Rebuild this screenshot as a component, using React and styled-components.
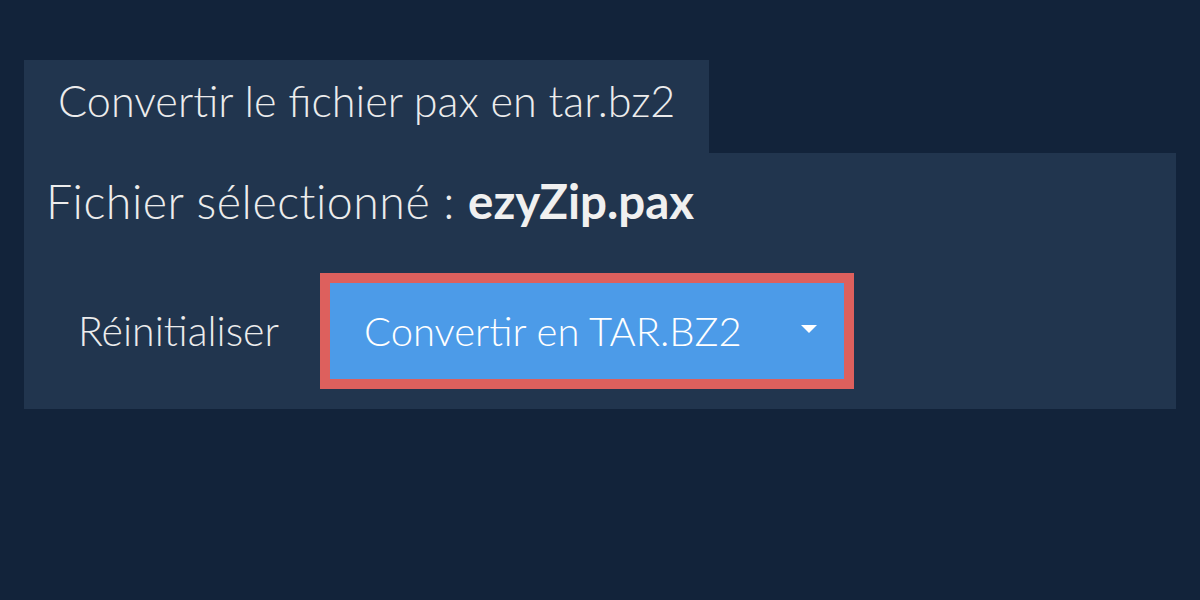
import React from "react";
import styled, { createGlobalStyle } from "styled-components";

const Global = createGlobalStyle`
  html, body { margin: 0; padding: 0; }
  body {
    background: #12233a;
    font-family: Lato, "Open Sans", sans-serif;
    font-weight: 300;
    color: #ececec;
    width: 1200px;
    height: 600px;
    overflow: hidden;
  }
`;

const Page = styled.div`
  padding: 60px 24px 0 24px;
`;

const Tab = styled.div`
  box-sizing: border-box;
  width: 685px;
  background: #21354e;
  font-size: 43.2px;
  line-height: 52px;
  padding: 14px 0 27px 34px;
  white-space: nowrap;
`;

const Panel = styled.div`
  background: #21354e;
  padding: 20px 22px 20px 22px;
`;

const FileLine = styled.div`
  font-size: 46.5px;
  line-height: 56px;
  letter-spacing: 0.5px;
  margin-bottom: 44px;
  white-space: nowrap;
`;

const FileName = styled.strong`
  font-weight: 700;
  font-size: 47.5px;
  letter-spacing: 0;
  color: #f0f0f0;
`;

const Actions = styled.div`
  display: flex;
  align-items: center;
  gap: 41px;
  padding-left: 32px;
`;

const ResetButton = styled.button`
  background: transparent;
  border: none;
  color: #ececec;
  font-family: inherit;
  font-weight: 300;
  font-size: 41px;
  line-height: 50px;
  padding: 0;
  cursor: pointer;
`;

const ConvertFrame = styled.div`
  border: 10px solid #dd605d;
`;

const ConvertButton = styled.button`
  display: flex;
  align-items: center;
  justify-content: space-between;
  box-sizing: border-box;
  width: 514px;
  height: 96px;
  background: #4c9be8;
  border: none;
  color: #ffffff;
  font-family: inherit;
  font-weight: 300;
  font-size: 40px;
  padding: 0 27px 0 34px;
  cursor: pointer;
`;

const Caret = styled.span`
  width: 0;
  height: 0;
  margin-bottom: 4px;
  border-left: 8px solid transparent;
  border-right: 8px solid transparent;
  border-top: 8px solid #ffffff;
`;

export default function App() {
  return (
    <>
      <Global />
      <Page>
        <Tab>Convertir le fichier pax en tar.bz2</Tab>
        <Panel>
          <FileLine>
            Fichier sélectionné : <FileName>ezyZip.pax</FileName>
          </FileLine>
          <Actions>
            <ResetButton>Réinitialiser</ResetButton>
            <ConvertFrame>
              <ConvertButton>
                <span>Convertir en TAR.BZ2</span>
                <Caret />
              </ConvertButton>
            </ConvertFrame>
          </Actions>
        </Panel>
      </Page>
    </>
  );
}
